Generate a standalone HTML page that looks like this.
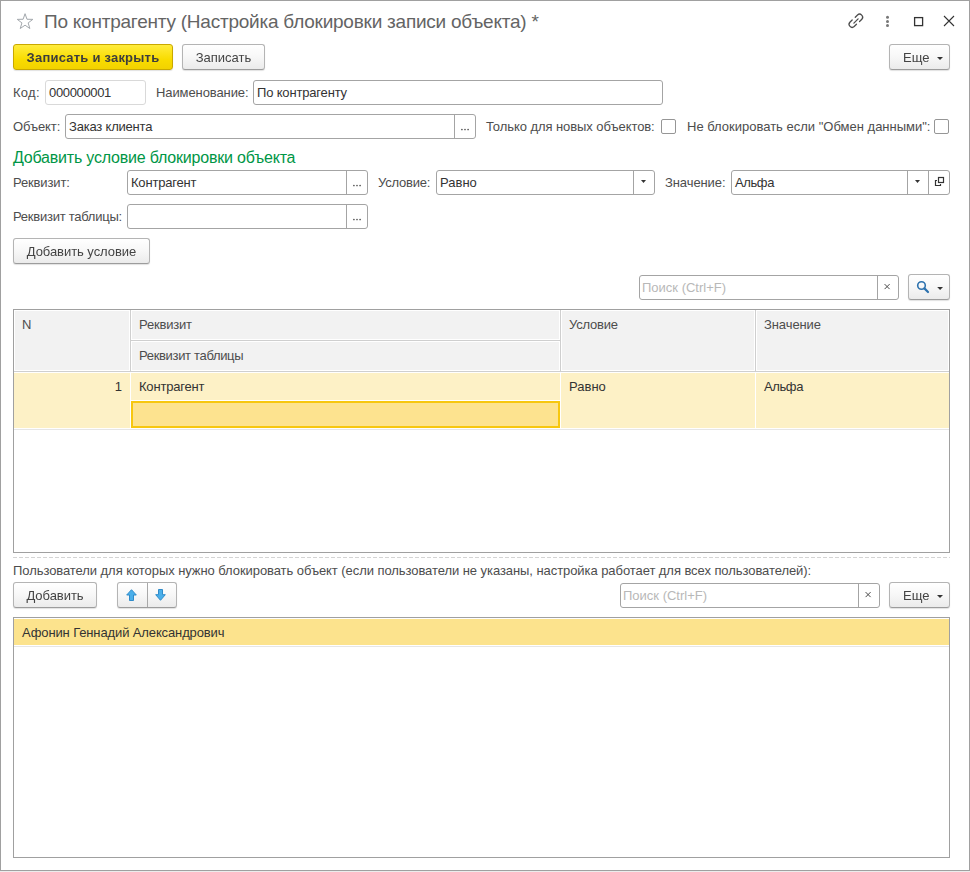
<!DOCTYPE html>
<html><head><meta charset="utf-8">
<style>
html,body{margin:0;padding:0;background:#fff;}
body{width:970px;height:872px;position:relative;overflow:hidden;font-family:"Liberation Sans",sans-serif;font-size:13px;color:#333;}
.a{position:absolute;white-space:nowrap;}
.frame{position:absolute;left:0;top:0;width:968px;height:869px;border:1px solid #a0a0a0;}
.shadow{position:absolute;left:0;top:871px;width:970px;height:1px;background:#ececec;}
.lbl{position:absolute;white-space:nowrap;color:#4d4d4d;font-size:13px;line-height:15px;}
.btn{position:absolute;box-sizing:border-box;will-change:transform;border:1px solid #b4b4b4;border-bottom-color:#9c9c9c;border-radius:3px;background:linear-gradient(#ffffff,#f7f7f7 50%,#ebebeb);box-shadow:0 1px 1px rgba(0,0,0,0.12);color:#444;text-align:center;font-size:13px;line-height:25px;height:26px;}
.btn.y{background:linear-gradient(#ffec3d,#f9dc00 60%,#f2d200);border-color:#c9a800;font-weight:bold;color:#3d3d3d;}
.inp{position:absolute;box-sizing:border-box;border:1px solid #a4a4a4;border-radius:3px;background:#fff;height:25px;}
.inp .t{position:absolute;left:3px;top:4px;color:#333;white-space:nowrap;line-height:15px;}
.inp .dd{position:absolute;top:0;bottom:0;border-left:1px solid #a4a4a4;}
.chk{position:absolute;box-sizing:border-box;width:15px;height:15px;border:1px solid #969696;border-radius:2px;background:#fff;}
.tbl{position:absolute;box-sizing:border-box;border:1px solid #a0a0a0;background:#fff;}
.hc{position:absolute;box-sizing:border-box;background:#f2f2f2;color:#4d4d4d;}
.hc>span{position:absolute;left:8px;top:8px;line-height:15px;}
</style></head><body>
<div class="frame"></div>
<div class="shadow"></div>

<!-- title -->
<svg class="a" style="left:16px;top:12px" width="18" height="18" viewBox="0 0 18 18"><path d="M9.05 1.70 L10.98 7.25 L16.85 7.37 L12.17 10.91 L13.87 16.53 L9.05 13.18 L4.23 16.53 L5.93 10.91 L1.25 7.37 L7.12 7.25 Z" fill="none" stroke="#a3a8ad" stroke-width="1" stroke-linejoin="miter"/></svg>
<div class="a" style="left:44px;top:11px;font-size:19px;line-height:22px;color:#646464;letter-spacing:-0.23px">По контрагенту (Настройка блокировки записи объекта) *</div>

<!-- window icons -->
<svg class="a" style="left:846px;top:11px" width="20" height="20" viewBox="0 0 20 20"><g transform="translate(9.9 9.8) scale(0.92) translate(-9.5 -9.3)" fill="none" stroke="#4d4d4d" stroke-width="1.4" stroke-linecap="round"><path d="M8.8 5.44 L11.27 2.97 A3.3 3.3 0 0 1 15.93 7.63 L13.46 10.1"/><path d="M5.44 8.4 L2.97 10.87 A3.3 3.3 0 0 0 7.63 15.53 L10.1 13.06"/><path d="M7.3 11.8 L11.9 7.2"/></g></svg>
<svg class="a" style="left:883px;top:13px" width="10" height="16" viewBox="0 0 10 16"><g fill="#777"><circle cx="4.5" cy="4.3" r="1.5"/><circle cx="4.5" cy="8.5" r="1.5"/><circle cx="4.5" cy="12.5" r="1.5"/></g></svg>
<svg class="a" style="left:910px;top:13px" width="16" height="16" viewBox="0 0 16 16"><rect x="4.6" y="4.6" width="8" height="8" fill="none" stroke="#333" stroke-width="1.3"/></svg>
<svg class="a" style="left:940px;top:12px" width="18" height="18" viewBox="0 0 18 18"><path d="M4 4 L14 14 M14 4 L4 14" stroke="#333" stroke-width="1.1"/></svg>

<!-- toolbar -->
<div class="btn y" style="left:13px;top:44px;width:160px;"><span style="letter-spacing:0.22px">Записать и закрыть</span></div>
<div class="btn" style="left:182px;top:44px;width:83px;">Записать</div>
<div class="btn" style="left:889px;top:44px;width:61px;"><span class="a" style="left:13px;top:0">Еще</span><svg class="a" style="left:47px;top:11px" width="7" height="5"><path d="M0 1 L6 1 L3 4 Z" fill="#333"/></svg></div>

<!-- Код / Наименование -->
<div class="lbl" style="left:13px;top:85px"><span style="letter-spacing:0.3px">Код:</span></div>
<div class="inp" style="left:45px;top:80px;width:101px;border-color:#d9d9d9"><span class="t"><span style="letter-spacing:-0.35px">000000001</span></span></div>
<div class="lbl" style="left:156px;top:85px"><span style="letter-spacing:-0.1px">Наименование:</span></div>
<div class="inp" style="left:253px;top:80px;width:410px;"><span class="t"><span style="letter-spacing:-0.17px">По контрагенту</span></span></div>

<!-- Объект -->
<div class="lbl" style="left:13px;top:119px"><span style="letter-spacing:-0.1px">Объект:</span></div>
<div class="inp" style="left:65px;top:114px;width:411px;"><span class="t"><span style="letter-spacing:-0.2px">Заказ клиента</span></span><div class="dd" style="left:388px;width:21px;"><svg class="a" style="left:0;top:0" width="21" height="23"><g fill="#555"><circle cx="6.9" cy="14.5" r="0.85"/><circle cx="10" cy="14.5" r="0.85"/><circle cx="13.1" cy="14.5" r="0.85"/></g></svg></div></div>
<div class="lbl" style="left:486px;top:119px"><span style="letter-spacing:-0.07px">Только для новых объектов:</span></div>
<div class="chk" style="left:661px;top:119px"></div>
<div class="lbl" style="left:687px;top:119px">Не блокировать если "Обмен данными":</div>
<div class="chk" style="left:934px;top:119px"></div>

<!-- group header -->
<div class="a" style="left:13px;top:149px;font-size:16px;line-height:18px;color:#009646;letter-spacing:-0.2px">Добавить условие блокировки объекта</div>

<div class="lbl" style="left:13px;top:175px"><span style="letter-spacing:-0.14px">Реквизит:</span></div>
<div class="inp" style="left:127px;top:170px;width:241px;"><span class="t"><span style="letter-spacing:-0.2px">Контрагент</span></span><div class="dd" style="left:218px;width:21px;"><svg class="a" style="left:0;top:0" width="21" height="23"><g fill="#555"><circle cx="6.9" cy="14.5" r="0.85"/><circle cx="10" cy="14.5" r="0.85"/><circle cx="13.1" cy="14.5" r="0.85"/></g></svg></div></div>
<div class="lbl" style="left:378px;top:175px"><span style="letter-spacing:-0.2px">Условие:</span></div>
<div class="inp" style="left:436px;top:170px;width:219px;"><span class="t">Равно</span><div class="dd" style="left:196px;width:21px;"><svg class="a" style="left:7px;top:9px" width="5" height="3"><path d="M0 0 L5 0 L2.5 3 Z" fill="#333"/></svg></div></div>
<div class="lbl" style="left:665px;top:175px"><span style="letter-spacing:-0.09px">Значение:</span></div>
<div class="inp" style="left:731px;top:170px;width:219px;"><span class="t"><span style="letter-spacing:-0.4px">Альфа</span></span><div class="dd" style="left:175px;width:20px;"><svg class="a" style="left:7px;top:9px" width="5" height="3"><path d="M0 0 L5 0 L2.5 3 Z" fill="#333"/></svg></div><div class="dd" style="left:196px;width:21px;"><svg class="a" style="left:4px;top:4px" width="14" height="14" viewBox="0 0 14 14"><g fill="none" stroke="#333" stroke-width="1.2"><rect x="5.5" y="2.5" width="5" height="5"/><path d="M4 5.5 H2.5 V10.5 H7.5 V9"/></g></svg></div></div>

<div class="lbl" style="left:13px;top:209px"><span style="letter-spacing:-0.25px">Реквизит таблицы:</span></div>
<div class="inp" style="left:127px;top:204px;width:241px;"><div class="dd" style="left:218px;width:21px;"><svg class="a" style="left:0;top:0" width="21" height="23"><g fill="#555"><circle cx="6.9" cy="14.5" r="0.85"/><circle cx="10" cy="14.5" r="0.85"/><circle cx="13.1" cy="14.5" r="0.85"/></g></svg></div></div>

<div class="btn" style="left:13px;top:238px;width:137px;"><span style="letter-spacing:-0.05px">Добавить условие</span></div>

<!-- search 1 -->
<div class="inp" style="left:639px;top:275px;width:260px;"><span class="t" style="color:#b8b8b8;left:2px">Поиск (Ctrl+F)</span><div class="dd" style="left:237px;width:21px;"><svg class="a" style="left:0;top:0" width="21" height="23"><path d="M6.6 8.1 L11.6 13.1 M11.6 8.1 L6.6 13.1" stroke="#4a4a4a" stroke-width="1"/></svg></div></div>
<div class="btn" style="left:908px;top:274px;width:42px;"><svg class="a" style="left:0;top:0" width="40" height="24"><circle cx="12.5" cy="10.5" r="3.8" fill="none" stroke="#2d72ae" stroke-width="1.6"/><path d="M15.4 13.4 L19 17" stroke="#2d72ae" stroke-width="2.2" stroke-linecap="round"/><path d="M28.2 12 L34 12 L31.1 15 Z" fill="#333"/></svg></div>

<!-- table 1 -->
<div class="tbl" style="left:13px;top:309px;width:937px;height:244px;"></div>
<!-- header cells -->
<div class="hc" style="left:14px;top:310px;width:116px;height:61px;border:1px solid #fff;"><span style="left:7px;top:6px">N</span></div>
<div class="a" style="left:130px;top:310px;width:1px;height:62px;background:#cfcfcf"></div>
<div class="hc" style="left:131px;top:310px;width:429px;height:30px;border:1px solid #fff;"><span style="left:7px;top:6px"><span style="letter-spacing:-0.19px">Реквизит</span></span></div>
<div class="a" style="left:131px;top:340px;width:429px;height:1px;background:#cfcfcf"></div>
<div class="hc" style="left:131px;top:341px;width:429px;height:30px;border:1px solid #fff;"><span style="left:7px;top:6px"><span style="letter-spacing:-0.33px">Реквизит таблицы</span></span></div>
<div class="a" style="left:560px;top:310px;width:1px;height:62px;background:#cfcfcf"></div>
<div class="hc" style="left:561px;top:310px;width:194px;height:61px;border:1px solid #fff;"><span style="left:7px;top:6px"><span style="letter-spacing:-0.2px">Условие</span></span></div>
<div class="a" style="left:755px;top:310px;width:1px;height:62px;background:#cfcfcf"></div>
<div class="hc" style="left:756px;top:310px;width:193px;height:61px;border:1px solid #fff;"><span style="left:7px;top:6px"><span style="letter-spacing:-0.09px">Значение</span></span></div>
<div class="a" style="left:14px;top:371px;width:935px;height:1px;background:#cfcfcf"></div>
<!-- data row -->
<div class="a" style="left:14px;top:373px;width:116px;height:55px;background:#fdf1c6"></div>
<div class="a" style="left:14px;top:379px;width:108px;text-align:right;color:#333;line-height:15px">1</div>
<div class="a" style="left:131px;top:373px;width:429px;height:27px;background:#fdf1c6"></div>
<div class="a" style="left:139px;top:379px;color:#333;line-height:15px"><span style="letter-spacing:-0.2px">Контрагент</span></div>
<div class="a" style="left:131px;top:401px;width:429px;height:27px;box-sizing:border-box;background:#fde38f;border:2px solid #f7c70f"></div>
<div class="a" style="left:561px;top:373px;width:194px;height:55px;background:#fdf1c6"></div>
<div class="a" style="left:569px;top:379px;color:#333;line-height:15px">Равно</div>
<div class="a" style="left:756px;top:373px;width:193px;height:55px;background:#fdf1c6"></div>
<div class="a" style="left:764px;top:379px;color:#333;line-height:15px"><span style="letter-spacing:-0.4px">Альфа</span></div>
<div class="a" style="left:14px;top:429px;width:935px;height:1px;background:#e6e6e6"></div>

<!-- separator -->
<div class="a" style="left:13px;top:557px;width:937px;height:1px;background:repeating-linear-gradient(to right,#d4d4d4 0 4px,transparent 4px 6px)"></div>
<div class="lbl" style="left:13px;top:563px"><span style="letter-spacing:-0.066px">Пользователи для которых нужно блокировать объект (если пользователи не указаны, настройка работает для всех пользователей):</span></div>

<div class="btn" style="left:13px;top:582px;width:84px;"><span style="letter-spacing:-0.05px">Добавить</span></div>
<div class="btn" style="left:117px;top:582px;width:60px;"></div>
<svg class="a" style="left:117px;top:582px" width="60" height="26"><path d="M30.5 1 V25" stroke="#a8a8a8" stroke-width="1"/><path d="M14.5 7.7 L19.3 13 H16.5 V18.5 H12.5 V13 H9.7 Z" fill="#4aafea" stroke="#2f8bc9" stroke-width="1" stroke-linejoin="miter"/><path d="M41.5 7.5 H45.5 V12.7 H48.3 L43.5 18.3 L38.7 12.7 H41.5 Z" fill="#4aafea" stroke="#2f8bc9" stroke-width="1"/></svg>

<div class="inp" style="left:620px;top:583px;width:260px;"><span class="t" style="color:#b8b8b8;left:2px">Поиск (Ctrl+F)</span><div class="dd" style="left:237px;width:21px;"><svg class="a" style="left:0;top:0" width="21" height="23"><path d="M6.6 8.1 L11.6 13.1 M11.6 8.1 L6.6 13.1" stroke="#4a4a4a" stroke-width="1"/></svg></div></div>
<div class="btn" style="left:889px;top:582px;width:61px;"><span class="a" style="left:13px;top:0">Еще</span><svg class="a" style="left:47px;top:11px" width="7" height="5"><path d="M0 1 L6 1 L3 4 Z" fill="#333"/></svg></div>

<!-- table 2 -->
<div class="tbl" style="left:13px;top:617px;width:937px;height:241px;"></div>
<div class="a" style="left:14px;top:619px;width:935px;height:26px;background:#fce38d"></div>
<div class="a" style="left:22px;top:625px;color:#333;line-height:15px"><span style="letter-spacing:-0.12px">Афонин Геннадий Александрович</span></div>
<div class="a" style="left:14px;top:646px;width:935px;height:1px;background:#e6e6e6"></div>

</body></html>
